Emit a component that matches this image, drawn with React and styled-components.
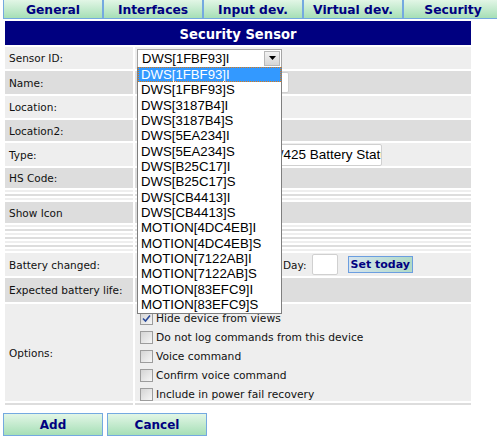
import styled, { createGlobalStyle } from "styled-components";

const GlobalStyle = createGlobalStyle`
  html, body {
    margin: 0;
    padding: 0;
    background: #ffffff;
    overflow: hidden;
  }
  body {
    font-family: "DejaVu Sans", Verdana, sans-serif;
    color: #111111;
  }
`;

const sensors = [
  "DWS[1FBF93]I",
  "DWS[1FBF93]S",
  "DWS[3187B4]I",
  "DWS[3187B4]S",
  "DWS[5EA234]I",
  "DWS[5EA234]S",
  "DWS[B25C17]I",
  "DWS[B25C17]S",
  "DWS[CB4413]I",
  "DWS[CB4413]S",
  "MOTION[4DC4EB]I",
  "MOTION[4DC4EB]S",
  "MOTION[7122AB]I",
  "MOTION[7122AB]S",
  "MOTION[83EFC9]I",
  "MOTION[83EFC9]S",
];

const tabs = ["General", "Interfaces", "Input dev.", "Virtual dev.", "Security"];

const options = [
  { label: "Hide device from views", checked: true },
  { label: "Do not log commands from this device" },
  { label: "Voice command" },
  { label: "Confirm voice command" },
  { label: "Include in power fail recovery" },
];

const Page = styled.div`
  padding-left: 3px;
  width: 600px;
`;

const TabBar = styled.div`
  display: flex;
  height: 19px;
`;

const Tab = styled.div`
  width: 100px;
  height: 19px;
  flex: none;
  box-sizing: border-box;
  border: 1px solid #74a9e0;
  border-top: none;
  background: linear-gradient(#e2f6e6, #a6dfb6);
  color: #000080;
  font-weight: bold;
  font-size: 12.3px;
  padding-top: 1px;
  display: flex;
  align-items: center;
  justify-content: center;
`;

const Form = styled.table`
  border-spacing: 2px;
  width: 470px;
  table-layout: fixed;
`;

const LabelCol = styled.col`
  width: 128px;
`;

const ValueCol = styled.col`
  width: 336px;
`;

const Header = styled.th`
  background: #000080;
  color: #ffffff;
  height: 24px;
  padding: 0;
  font-family: "DejaVu Sans Condensed", "DejaVu Sans", sans-serif;
  font-size: 14.6px;
  font-weight: bold;
  text-align: center;
`;

const Row = styled.tr`
  background: ${({ $dark }) => ($dark ? "#dddddd" : "#eeeeee")};
`;

const Label = styled.td`
  height: ${({ $h }) => $h || 2}px;
  padding: 0 0 0 4px;
  font-size: 10.5px;
  vertical-align: middle;
  white-space: nowrap;
  overflow: hidden;
`;

const Value = styled.td`
  height: ${({ $h }) => $h || 2}px;
  padding: 0 0 0 2px;
  vertical-align: ${({ $top }) => ($top ? "top" : "middle")};
  position: relative;
`;

const Empty = styled.td`
  height: 2px;
  padding: 0;
`;

const SelectBox = styled.div`
  position: relative;
  width: 145px;
  height: 19px;
  box-sizing: border-box;
  border: 1px solid #a5a5a5;
  background: #ffffff;
  font-family: "Liberation Sans", Arial, sans-serif;
  font-size: 13px;
  line-height: 17px;
  padding-left: 4px;
  color: #000;
`;

const SelectButton = styled.span`
  position: absolute;
  right: 1px;
  top: 1px;
  width: 16px;
  height: 15px;
  box-sizing: border-box;
  border: 1px solid #b8b8b8;
  background: linear-gradient(#f2f2f2, #d6d6d6);
  display: flex;
  align-items: center;
  justify-content: center;
`;

const ListBox = styled.ul`
  position: absolute;
  left: 2px;
  top: 20px;
  z-index: 5;
  width: 145px;
  margin: 0;
  padding: 0;
  list-style: none;
  box-sizing: border-box;
  border: 1px solid #7f7f7f;
  border-top: none;
  background: #ffffff;
  font-family: "Liberation Sans", Arial, sans-serif;
  font-size: 13.2px;
`;

const ListItem = styled.li`
  height: 15.35px;
  line-height: 15px;
  padding-left: 3px;
  box-sizing: border-box;
  color: ${({ $active }) => ($active ? "#ffffff" : "#000000")};
  background: ${({ $active }) => ($active ? "#3399ff" : "transparent")};
  outline: ${({ $active }) => ($active ? "1px dotted #e07a10" : "none")};
  outline-offset: -1px;
  white-space: nowrap;
`;

const TextInput = styled.div`
  width: ${({ $w }) => $w}px;
  height: ${({ $hh }) => $hh || 21}px;
  flex: none;
  box-sizing: border-box;
  border: 1px solid #d0d0d0;
  border-radius: 2px;
  background: #ffffff;
  font-family: "Liberation Sans", Arial, sans-serif;
  font-size: ${({ $fs }) => $fs || 13}px;
  line-height: 19px;
  padding-left: 3px;
  overflow: hidden;
  white-space: nowrap;
  color: #000;
`;

const DateLine = styled.div`
  display: flex;
  align-items: center;
  font-size: 10.5px;
  white-space: nowrap;
`;

const HiddenDate = styled.div`
  width: 146px;
  flex: none;
  display: flex;
  align-items: center;
  gap: 4px;
  overflow: hidden;
`;

const SmallInput = styled(TextInput)`
  margin: 0 10px 0 5px;
`;

const TodayButton = styled.button`
  height: 17px;
  padding: 0 2px;
  border: 1px solid #6b9ee0;
  background: linear-gradient(90deg, #d6e4ee, #b0dac6);
  color: #000080;
  font-family: "DejaVu Sans", Verdana, sans-serif;
  font-weight: bold;
  font-size: 11px;
  line-height: 15px;
  white-space: nowrap;
`;

const OptionList = styled.div`
  display: flex;
  flex-direction: column;
  height: 97px;
  box-sizing: border-box;
  padding: 5px 0 0 3px;
`;

const OptionLine = styled.label`
  display: flex;
  align-items: center;
  flex: none;
  height: 19px;
  gap: 3px;
  font-size: 10.7px;
  white-space: nowrap;
`;

const Box = styled.span`
  width: 13px;
  height: 13px;
  box-sizing: border-box;
  border: 1px solid #9c9c9c;
  background: linear-gradient(135deg, #d4d4d4, #f6f6f6);
  display: flex;
  align-items: center;
  justify-content: center;
`;

const Buttons = styled.div`
  display: flex;
  gap: 4px;
  margin-top: 6px;
`;

const ActionButton = styled.button`
  width: 100px;
  height: 23px;
  border: 1px solid #74a9e0;
  background: linear-gradient(#e2f6e6, #a6dfb6);
  color: #000080;
  font-family: "DejaVu Sans", Verdana, sans-serif;
  font-weight: bold;
  font-size: 12px;
  padding: 0;
`;

const Check = () => (
  <svg width="9" height="9" viewBox="0 0 9 9">
    <path d="M1 4.5 L3.5 7 L8 1.5" stroke="#2a4a9a" strokeWidth="1.6" fill="none" />
  </svg>
);

const Arrow = () => (
  <svg width="7" height="4" viewBox="0 0 7 4">
    <path d="M0 0 H7 L3.5 4 Z" fill="#000" />
  </svg>
);

const EmptyRows = ({ count, startDark }) =>
  Array.from({ length: count }, (_, i) => (
    <Row key={i} $dark={(i % 2 === 0) === startDark}>
      <Empty />
      <Empty />
    </Row>
  ));

export default function App() {
  return (
    <Page>
      <GlobalStyle />
      <TabBar>
        {tabs.map((t) => (
          <Tab key={t}>{t}</Tab>
        ))}
      </TabBar>
      <Form>
        <colgroup>
          <LabelCol />
          <ValueCol />
        </colgroup>
        <tbody>
          <tr>
            <Header colSpan={2}>Security Sensor</Header>
          </tr>
          <Row>
            <Label $h={22}>Sensor ID:</Label>
            <Value $h={22}>
              <SelectBox>
                DWS[1FBF93]I
                <SelectButton>
                  <Arrow />
                </SelectButton>
              </SelectBox>
              <ListBox>
                {sensors.map((s, i) => (
                  <ListItem key={s} $active={i === 0}>
                    {s}
                  </ListItem>
                ))}
              </ListBox>
            </Value>
          </Row>
          <Row $dark>
            <Label $h={23}>Name:</Label>
            <Value $h={23}>
              <TextInput $w={152} />
            </Value>
          </Row>
          <Row>
            <Label $h={22}>Location:</Label>
            <Value $h={22} />
          </Row>
          <Row $dark>
            <Label $h={21}>Location2:</Label>
            <Value $h={21} />
          </Row>
          <Row>
            <Label $h={23}>Type:</Label>
            <Value $h={23}>
              <TextInput $w={245} $hh={22} $fs={13.5}>
                Door/Window Sensor 2/425 Battery Status
              </TextInput>
            </Value>
          </Row>
          <Row $dark>
            <Label $h={20}>HS Code:</Label>
            <Value $h={20} />
          </Row>
          <EmptyRows count={3} startDark={false} />
          <Row $dark>
            <Label $h={21}>Show Icon</Label>
            <Value $h={21} />
          </Row>
          <EmptyRows count={7} startDark={false} />
          <Row>
            <Label $h={23}>Battery changed:</Label>
            <Value $h={23}>
              <DateLine>
                <HiddenDate>
                  <TextInput $w={40} />
                  <TextInput $w={26} />
                </HiddenDate>
                Day:
                <SmallInput $w={26} />
                <TodayButton>Set today</TodayButton>
              </DateLine>
            </Value>
          </Row>
          <Row $dark>
            <Label $h={24}>Expected battery life:</Label>
            <Value $h={24} />
          </Row>
          <Row>
            <Label $h={97}>Options:</Label>
            <Value $h={97} $top>
              <OptionList>
                {options.map((o) => (
                  <OptionLine key={o.label}>
                    <Box>{o.checked && <Check />}</Box>
                    {o.label}
                  </OptionLine>
                ))}
              </OptionList>
            </Value>
          </Row>
          <Row $dark>
            <Empty />
            <Empty />
          </Row>
        </tbody>
      </Form>
      <Buttons>
        <ActionButton>Add</ActionButton>
        <ActionButton>Cancel</ActionButton>
      </Buttons>
    </Page>
  );
}
